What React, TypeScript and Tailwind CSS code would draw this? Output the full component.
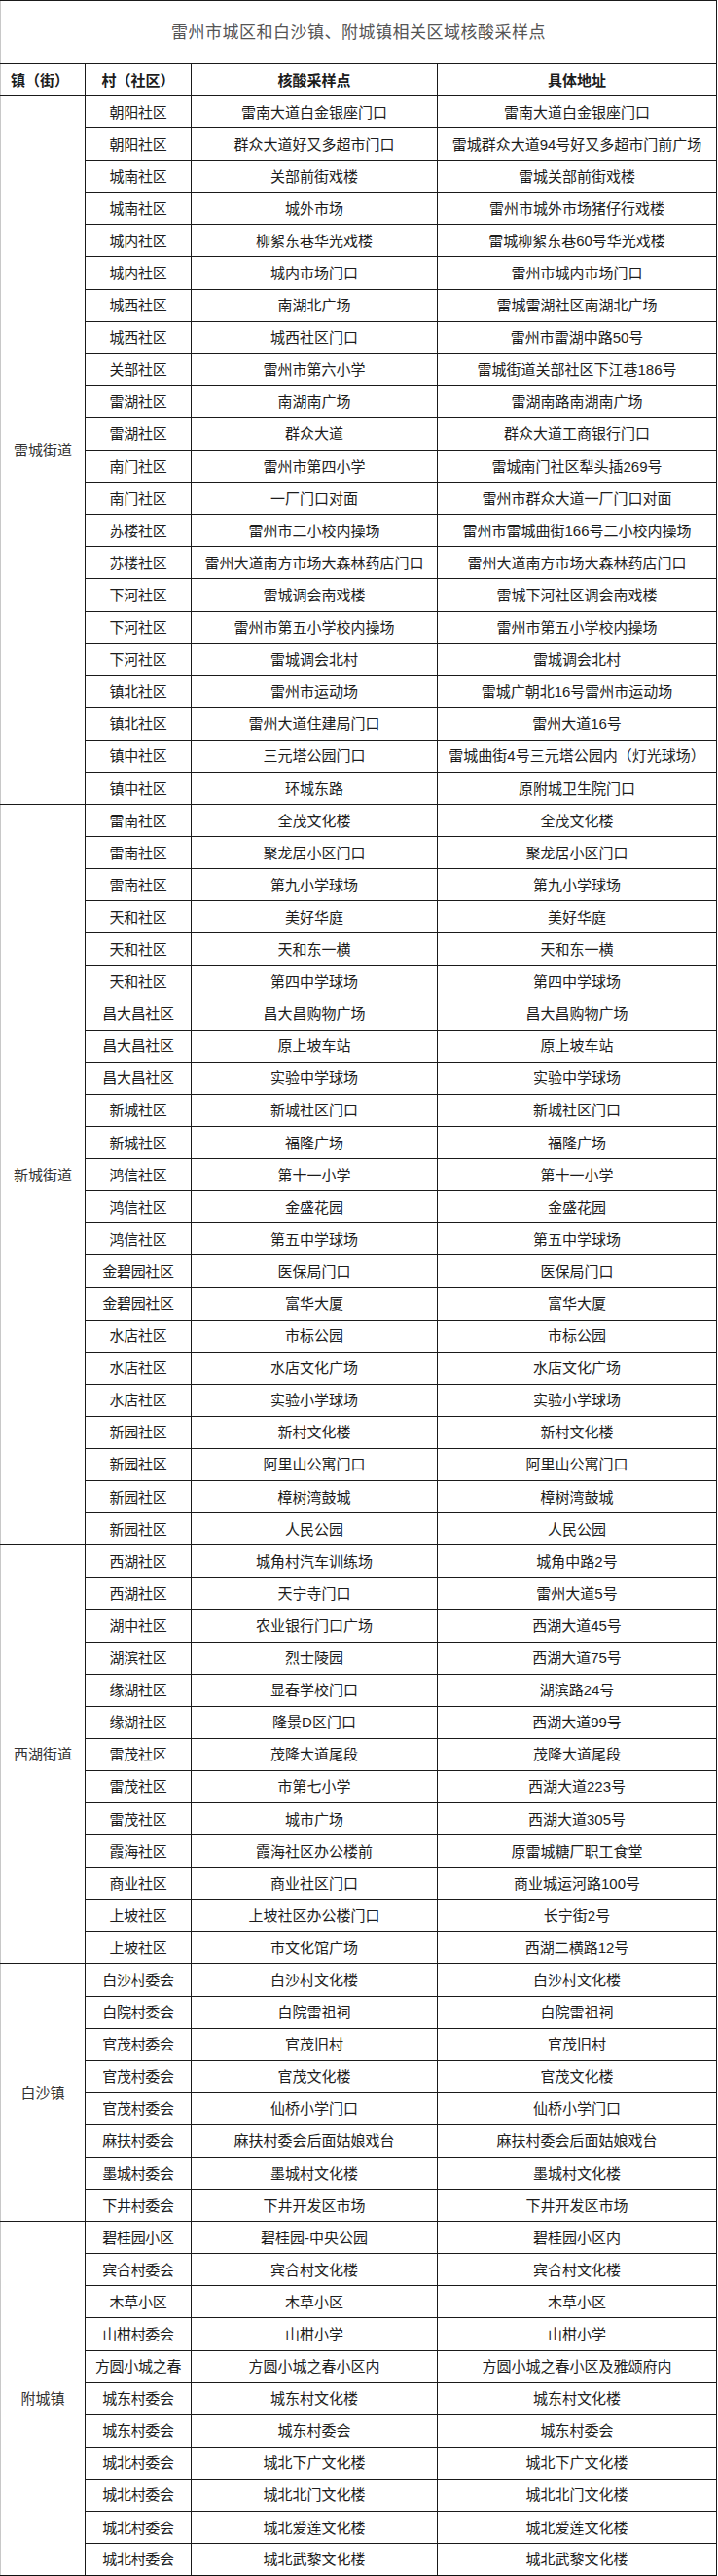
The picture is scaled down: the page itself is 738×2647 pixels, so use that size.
import React from "react";

type Row = [string, string, string];

interface Group {
  town: string;
  rows: Row[];
}

const groups: Group[] = [
  {
    town: "雷城街道",
    rows: [
      ["朝阳社区", "雷南大道白金银座门口", "雷南大道白金银座门口"],
      ["朝阳社区", "群众大道好又多超市门口", "雷城群众大道94号好又多超市门前广场"],
      ["城南社区", "关部前街戏楼", "雷城关部前街戏楼"],
      ["城南社区", "城外市场", "雷州市城外市场猪仔行戏楼"],
      ["城内社区", "柳絮东巷华光戏楼", "雷城柳絮东巷60号华光戏楼"],
      ["城内社区", "城内市场门口", "雷州市城内市场门口"],
      ["城西社区", "南湖北广场", "雷城雷湖社区南湖北广场"],
      ["城西社区", "城西社区门口", "雷州市雷湖中路50号"],
      ["关部社区", "雷州市第六小学", "雷城街道关部社区下江巷186号"],
      ["雷湖社区", "南湖南广场", "雷湖南路南湖南广场"],
      ["雷湖社区", "群众大道", "群众大道工商银行门口"],
      ["南门社区", "雷州市第四小学", "雷城南门社区犁头插269号"],
      ["南门社区", "一厂门口对面", "雷州市群众大道一厂门口对面"],
      ["苏楼社区", "雷州市二小校内操场", "雷州市雷城曲街166号二小校内操场"],
      ["苏楼社区", "雷州大道南方市场大森林药店门口", "雷州大道南方市场大森林药店门口"],
      ["下河社区", "雷城调会南戏楼", "雷城下河社区调会南戏楼"],
      ["下河社区", "雷州市第五小学校内操场", "雷州市第五小学校内操场"],
      ["下河社区", "雷城调会北村", "雷城调会北村"],
      ["镇北社区", "雷州市运动场", "雷城广朝北16号雷州市运动场"],
      ["镇北社区", "雷州大道住建局门口", "雷州大道16号"],
      ["镇中社区", "三元塔公园门口", "雷城曲街4号三元塔公园内（灯光球场）"],
      ["镇中社区", "环城东路", "原附城卫生院门口"],
    ],
  },
  {
    town: "新城街道",
    rows: [
      ["雷南社区", "全茂文化楼", "全茂文化楼"],
      ["雷南社区", "聚龙居小区门口", "聚龙居小区门口"],
      ["雷南社区", "第九小学球场", "第九小学球场"],
      ["天和社区", "美好华庭", "美好华庭"],
      ["天和社区", "天和东一横", "天和东一横"],
      ["天和社区", "第四中学球场", "第四中学球场"],
      ["昌大昌社区", "昌大昌购物广场", "昌大昌购物广场"],
      ["昌大昌社区", "原上坡车站", "原上坡车站"],
      ["昌大昌社区", "实验中学球场", "实验中学球场"],
      ["新城社区", "新城社区门口", "新城社区门口"],
      ["新城社区", "福隆广场", "福隆广场"],
      ["鸿信社区", "第十一小学", "第十一小学"],
      ["鸿信社区", "金盛花园", "金盛花园"],
      ["鸿信社区", "第五中学球场", "第五中学球场"],
      ["金碧园社区", "医保局门口", "医保局门口"],
      ["金碧园社区", "富华大厦", "富华大厦"],
      ["水店社区", "市标公园", "市标公园"],
      ["水店社区", "水店文化广场", "水店文化广场"],
      ["水店社区", "实验小学球场", "实验小学球场"],
      ["新园社区", "新村文化楼", "新村文化楼"],
      ["新园社区", "阿里山公寓门口", "阿里山公寓门口"],
      ["新园社区", "樟树湾鼓城", "樟树湾鼓城"],
      ["新园社区", "人民公园", "人民公园"],
    ],
  },
  {
    town: "西湖街道",
    rows: [
      ["西湖社区", "城角村汽车训练场", "城角中路2号"],
      ["西湖社区", "天宁寺门口", "雷州大道5号"],
      ["湖中社区", "农业银行门口广场", "西湖大道45号"],
      ["湖滨社区", "烈士陵园", "西湖大道75号"],
      ["缘湖社区", "显春学校门口", "湖滨路24号"],
      ["缘湖社区", "隆景D区门口", "西湖大道99号"],
      ["雷茂社区", "茂隆大道尾段", "茂隆大道尾段"],
      ["雷茂社区", "市第七小学", "西湖大道223号"],
      ["雷茂社区", "城市广场", "西湖大道305号"],
      ["霞海社区", "霞海社区办公楼前", "原雷城糖厂职工食堂"],
      ["商业社区", "商业社区门口", "商业城运河路100号"],
      ["上坡社区", "上坡社区办公楼门口", "长宁街2号"],
      ["上坡社区", "市文化馆广场", "西湖二横路12号"],
    ],
  },
  {
    town: "白沙镇",
    rows: [
      ["白沙村委会", "白沙村文化楼", "白沙村文化楼"],
      ["白院村委会", "白院雷祖祠", "白院雷祖祠"],
      ["官茂村委会", "官茂旧村", "官茂旧村"],
      ["官茂村委会", "官茂文化楼", "官茂文化楼"],
      ["官茂村委会", "仙桥小学门口", "仙桥小学门口"],
      ["麻扶村委会", "麻扶村委会后面姑娘戏台", "麻扶村委会后面姑娘戏台"],
      ["墨城村委会", "墨城村文化楼", "墨城村文化楼"],
      ["下井村委会", "下井开发区市场", "下井开发区市场"],
    ],
  },
  {
    town: "附城镇",
    rows: [
      ["碧桂园小区", "碧桂园-中央公园", "碧桂园小区内"],
      ["宾合村委会", "宾合村文化楼", "宾合村文化楼"],
      ["木草小区", "木草小区", "木草小区"],
      ["山柑村委会", "山柑小学", "山柑小学"],
      ["方圆小城之春", "方圆小城之春小区内", "方圆小城之春小区及雅颂府内"],
      ["城东村委会", "城东村文化楼", "城东村文化楼"],
      ["城东村委会", "城东村委会", "城东村委会"],
      ["城北村委会", "城北下广文化楼", "城北下广文化楼"],
      ["城北村委会", "城北北门文化楼", "城北北门文化楼"],
      ["城北村委会", "城北爱莲文化楼", "城北爱莲文化楼"],
      ["城北村委会", "城北武黎文化楼", "城北武黎文化楼"],
    ],
  },
];

const cell = "border border-[#1a1a1a] text-center align-middle p-0 whitespace-nowrap";

export default function App() {
  return (
    <div
      className="w-[738px] bg-white text-[15px] leading-none text-[#1c1c1c]"
      style={{ fontFamily: '"Liberation Sans", "Noto Sans CJK SC", sans-serif' }}
    >
      <table className="w-[736px] table-fixed border-collapse border-b-2 border-b-[#111]">
        <colgroup>
          <col className="w-[87px]" />
          <col className="w-[109px]" />
          <col className="w-[253px]" />
          <col className="w-[287px]" />
        </colgroup>
        <thead>
          <tr className="h-[65px]">
            <th colSpan={4} className={`${cell} border-l-[#c8c8c8] text-[17px] font-normal text-[#555] tracking-[0.5px]`}>
              雷州市城区和白沙镇、附城镇相关区域核酸采样点
            </th>
          </tr>
          <tr className="h-[33px]">
            <th className={`${cell} border-l-[#c8c8c8] font-bold text-left pl-[10px]`}>镇（街）</th>
            <th className={`${cell} font-bold`}>村（社区）</th>
            <th className={`${cell} font-bold`}>核酸采样点</th>
            <th className={`${cell} font-bold`}>具体地址</th>
          </tr>
        </thead>
        <tbody>
          {groups.map((g) =>
            g.rows.map((r, i) => (
              <tr key={g.town + i} className="h-[33.1px]">
                {i === 0 && (
                  <td rowSpan={g.rows.length} className={`${cell} border-l-[#c8c8c8] text-[#333]`}>
                    {g.town}
                  </td>
                )}
                <td className={`${cell} tracking-[-0.3px]`}>{r[0]}</td>
                <td className={cell}>{r[1]}</td>
                <td className={cell}>{r[2]}</td>
              </tr>
            ))
          )}
        </tbody>
      </table>
    </div>
  );
}
